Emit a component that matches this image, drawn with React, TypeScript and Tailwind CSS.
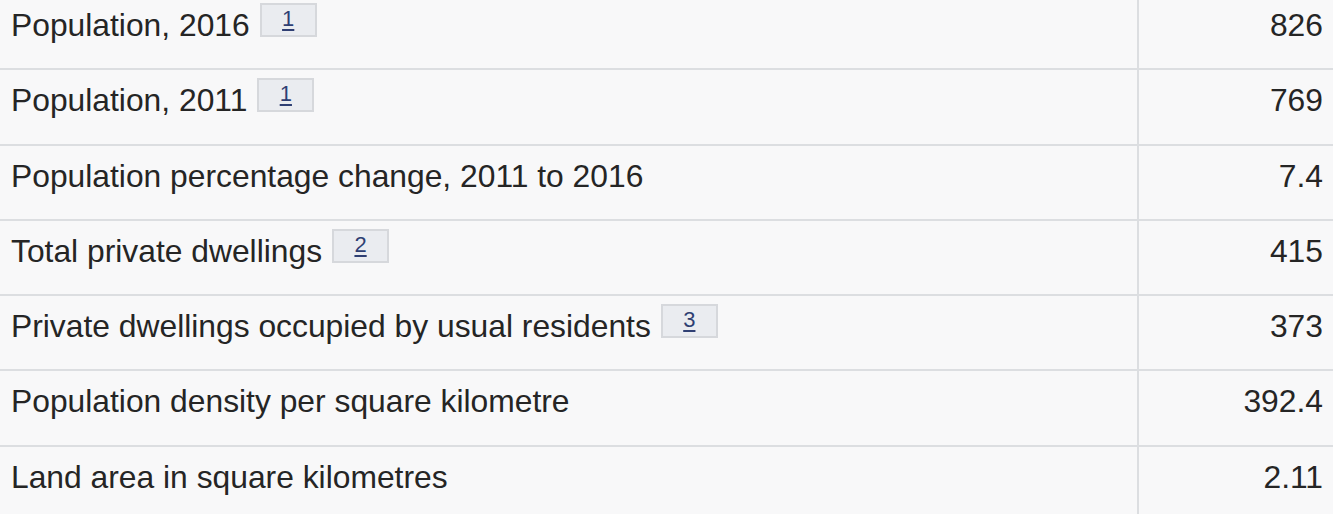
const rows: { label: string; note?: string; value: string }[] = [
  { label: 'Population, 2016', note: '1', value: '826' },
  { label: 'Population, 2011', note: '1', value: '769' },
  { label: 'Population percentage change, 2011 to 2016', value: '7.4' },
  { label: 'Total private dwellings', note: '2', value: '415' },
  { label: 'Private dwellings occupied by usual residents', note: '3', value: '373' },
  { label: 'Population density per square kilometre', value: '392.4' },
  { label: 'Land area in square kilometres', value: '2.11' },
];

export default function App() {
  return (
    <div className="w-[1333px] h-[514px] overflow-hidden bg-[#f8f8f9] text-[#252525] font-['Liberation_Sans',Arial,sans-serif]">
      <div className="-mt-[5px] flex flex-col">
        {rows.map((r, i) => (
          <div
            key={i}
            className="flex h-[75.3px] shrink-0 border-b-2 border-[#dcdee1]"
          >
            <div className="flex-1 flex items-start pl-[11px] pt-[10px]">
              <span className="text-[31.8px] leading-[40px] whitespace-nowrap">{r.label}</span>
              {r.note && (
                <span className="ml-[10px] mt-[-2px] flex h-[34px] w-[57px] justify-center border-2 border-[#d6d8dc] bg-[#eaecf0]">
                  <a className="text-[22px] leading-[28px] text-[#2f3f73] underline underline-offset-[3px]">{r.note}</a>
                </span>
              )}
            </div>
            <div className="w-[196px] border-l-2 border-[#dcdee1] flex items-start justify-end pr-[10px] pt-[10px]">
              <span className="text-[31.8px] leading-[40px]">{r.value}</span>
            </div>
          </div>
        ))}
      </div>
    </div>
  );
}
